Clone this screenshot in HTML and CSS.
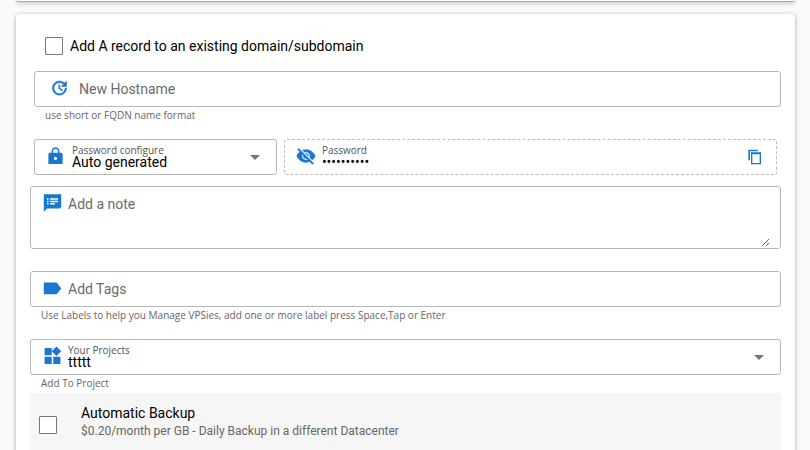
FILE: index.html
```html
<!DOCTYPE html>
<html lang="en">
<head>
    <meta charset="UTF-8">
    <meta name="viewport" content="width=device-width, initial-scale=1.0">
    <title>Deploy VPSie</title>
    <link rel="stylesheet" href="styles.css">
</head>
<body>
    <div class="card card-previous"></div>

    <form class="card settings">
        <label class="record-option">
            <input type="checkbox" class="checkbox">
            <span>Add A record to an existing domain/subdomain</span>
        </label>

        <div class="field hostname">
            <svg class="icon" viewBox="0 0 24 24"><path stroke="#1976d2" stroke-width=".6" d="M21 10.12h-6.78l2.74-2.82c-2.73-2.7-7.15-2.8-9.88-.1-2.73 2.71-2.73 7.08 0 9.79s7.15 2.71 9.88 0C18.32 15.65 19 14.08 19 12.1h2c0 1.98-.88 4.55-2.64 6.29-3.51 3.48-9.21 3.48-12.72 0-3.5-3.47-3.53-9.11-.02-12.58s9.14-3.47 12.65 0L21 3v7.12zM12.5 8v4.25l3.5 2.08-.72 1.21L11 13V8h1.5z"/></svg>
            <input type="text" class="text-input" placeholder="New Hostname" aria-label="New Hostname">
        </div>
        <p class="hint hostname-hint">use short or FQDN name format</p>

        <div class="password-row">
            <div class="field password-type">
                <svg class="icon" viewBox="0 0 24 24"><path d="M18 8h-1V6c0-2.76-2.24-5-5-5S7 3.24 7 6v2H5c-1.100 0-2 .9-2 2v12h18V10c0-1.100-.9-2-2-2h-1zm-6 9c-1.100 0-2-.9-2-2s.9-2 2-2 2 .9 2 2-.9 2-2 2zM8.900 8V6c0-1.710 1.390-3.100 3.100-3.100s3.100 1.390 3.100 3.100v2H8.900z"/></svg>
                <div class="stack">
                    <label for="password-configure">Password configure</label>
                    <select id="password-configure">
                        <option>Auto generated</option>
                    </select>
                </div>
                <svg class="arrow" viewBox="0 0 10 5"><path d="M0 0h10L5 5z"/></svg>
            </div>
            <div class="field password-value">
                <svg class="icon icon-eye" viewBox="0 0 24 24"><path stroke="#1976d2" stroke-width=".8" d="M12 7c2.76 0 5 2.24 5 5 0 .65-.13 1.26-.36 1.83l2.92 2.92c1.51-1.26 2.7-2.89 3.43-4.75-1.73-4.39-6-7.5-11-7.5-1.4 0-2.74.25-3.98.7l2.16 2.16C10.74 7.13 11.35 7 12 7zM2 4.27l2.28 2.28.46.46C3.08 8.3 1.78 10.02 1 12c1.73 4.39 6 7.5 11 7.5 1.55 0 3.03-.3 4.38-.84l.42.42L19.73 22 21 20.73 3.27 3 2 4.27zM7.53 9.8l1.55 1.55c-.05.21-.08.43-.08.65 0 1.66 1.34 3 3 3 .22 0 .44-.03.65-.08l1.55 1.55c-.67.33-1.41.53-2.2.53-2.76 0-5-2.24-5-5 0-.79.2-1.53.53-2.2zm4.31-.78l3.15 3.15.02-.16c0-1.66-1.34-3-3-3l-.17.01z"/></svg>
                <div class="stack">
                    <label for="password">Password</label>
                    <input type="password" id="password" value="abcdefghij" readonly>
                </div>
                <button type="button" class="copy-button" aria-label="Copy password">
                    <svg viewBox="0 0 24 24"><path d="M16 1H2v16h2.500V3.500H16V1zm5 4H6v18h15V5zm-2 16H8V8h11v13z"/></svg>
                </button>
            </div>
        </div>

        <div class="field note">
            <svg class="icon" viewBox="0 0 24 24"><path d="M23 1H1v22l4-4h16l2-2V1zM7 14H5v-2h2v2zm0-3H5V9h2v2zm0-3H5V6h2v2zm8 6H9v-2h6v2zm4-3H9V9h10v2zm0-3H9V6h10v2z"/></svg>
            <textarea placeholder="Add a note" aria-label="Add a note"></textarea>
        </div>

        <div class="field tags">
            <svg class="icon" viewBox="0 0 24 24"><path d="M18 6c-.4-.6-1-1-1.800-1H2.500C1.600 5 1 5.500 1 6.500v12c0 1 .6 1.500 1.500 1.500h13.700c.8 0 1.400-.4 1.800-1l5-6.500z"/></svg>
            <input type="text" class="text-input" placeholder="Add Tags" aria-label="Add Tags">
        </div>
        <p class="hint">Use Labels to help you Manage VPSies, add one or more label press Space,Tap or Enter</p>

        <div class="field projects">
            <svg class="icon" viewBox="0 0 24 24"><path d="M13 13v9h9v-9h-9zM2 22h9v-9H2v9zM2 2v9h9V2H2zm15-2l-6 6 6 6 6-6z"/></svg>
            <div class="stack">
                <label for="project">Your Projects</label>
                <select id="project">
                    <option>ttttt</option>
                </select>
            </div>
            <svg class="arrow" viewBox="0 0 10 5"><path d="M0 0h10L5 5z"/></svg>
        </div>
        <p class="hint">Add To Project</p>

        <label class="backup">
            <input type="checkbox" class="checkbox">
            <span class="backup-text">
                <span>Automatic Backup</span>
                <span class="backup-price">$0.20/month per GB - Daily Backup in a different Datacenter</span>
            </span>
        </label>
    </form>
</body>
</html>
```

FILE: styles.css
```css
* {
    box-sizing: border-box;
}

body {
    margin: 0;
    padding: 0 15px 0 16px;
    height: 100vh;
    overflow: hidden;
    background: #fafafa;
    color: #000;
    font-family: Roboto, sans-serif;
    font-size: 14px;
}

.card {
    background: #fff;
    border-radius: 4px;
    box-shadow: 0 1px 4px rgba(0, 0, 0, 0.35);
}

.card-previous {
    height: 2px;
    border-radius: 0 0 4px 4px;
    border-bottom: 1px solid #aaa;
    margin-bottom: 12px;
}

.settings {
    padding: 22px 14px 20px;
}

.record-option {
    display: flex;
    align-items: center;
    gap: 7px;
    height: 20px;
    margin: 0 0 15px 15px;
}

.checkbox {
    appearance: none;
    flex: none;
    width: 18px;
    height: 18px;
    margin: 0;
    border: 1px solid #777;
    border-radius: 1px;
    background: #fff;
}

.checkbox:checked {
    background: #1976d2;
}

/* outlined fields */
.field {
    display: flex;
    align-items: center;
    gap: 6px;
    height: 36px;
    padding: 0 12px;
    border: 1px solid #b8b8b8;
    border-radius: 3px;
}

.icon {
    flex: none;
    width: 19px;
    height: 20px;
    margin-bottom: 2px;
    fill: #1976d2;
}

.text-input,
.stack input,
.stack select,
.note textarea {
    min-width: 0;
    padding: 0;
    border: none;
    outline: none;
    background: transparent;
    color: #000;
    font-family: inherit;
    font-size: 14px;
}

.text-input {
    flex: 1;
}

::placeholder {
    color: #6b6b6b;
    opacity: 1;
}

.hostname {
    gap: 10px;
    margin-left: 4px;
    padding-left: 15px;
}

.hint {
    margin: 0 11px;
    padding-top: 1px;
    color: #666;
    font-family: "Open Sans", sans-serif;
    font-size: 10px;
    line-height: 14px;
}

.hostname-hint {
    margin-left: 15px;
}

.password-row {
    display: grid;
    grid-template-columns: 33fr 67fr;
    gap: 7px;
    margin: 17px 4px 11px;
}

.password-type {
    gap: 7px;
    padding: 0 16px 0 11px;
}

.password-value {
    padding-left: 11px;
    border: 1px dashed #bbb;
}

.icon-eye {
    width: 20px;
}

.stack {
    display: flex;
    flex: 1;
    flex-direction: column;
    min-width: 0;
}

.stack label {
    color: #555;
    font-family: "Open Sans", sans-serif;
    font-size: 10px;
    line-height: 12px;
}

.stack input,
.stack select {
    width: 100%;
    height: 16px;
    margin: -2px 0 0;
    appearance: none;
    line-height: 16px;
}

.arrow {
    flex: none;
    width: 10px;
    height: 5px;
    fill: #757575;
}

.copy-button {
    display: flex;
    padding: 0;
    border: none;
    background: none;
    cursor: pointer;
}

.copy-button svg {
    width: 16px;
    height: 16px;
    margin-right: 1px;
    fill: #1976d2;
}

.note {
    align-items: flex-start;
    height: 63px;
    margin-bottom: 22px;
    padding: 6px 10px 0 12px;
}

.note textarea {
    flex: 1;
    height: 54px;
    padding-top: 2px;
    line-height: 18px;
    resize: vertical;
}

.projects {
    margin-top: 17px;
    padding-right: 16px;
}

.backup {
    display: flex;
    align-items: center;
    gap: 24px;
    height: 64px;
    margin-top: 3px;
    padding: 0 9px;
    background: #f6f6f6;
}

.backup-text {
    display: flex;
    flex-direction: column;
    padding-bottom: 6px;
    line-height: 18px;
}

.backup-price {
    color: #666;
    font-size: 12px;
}
```
